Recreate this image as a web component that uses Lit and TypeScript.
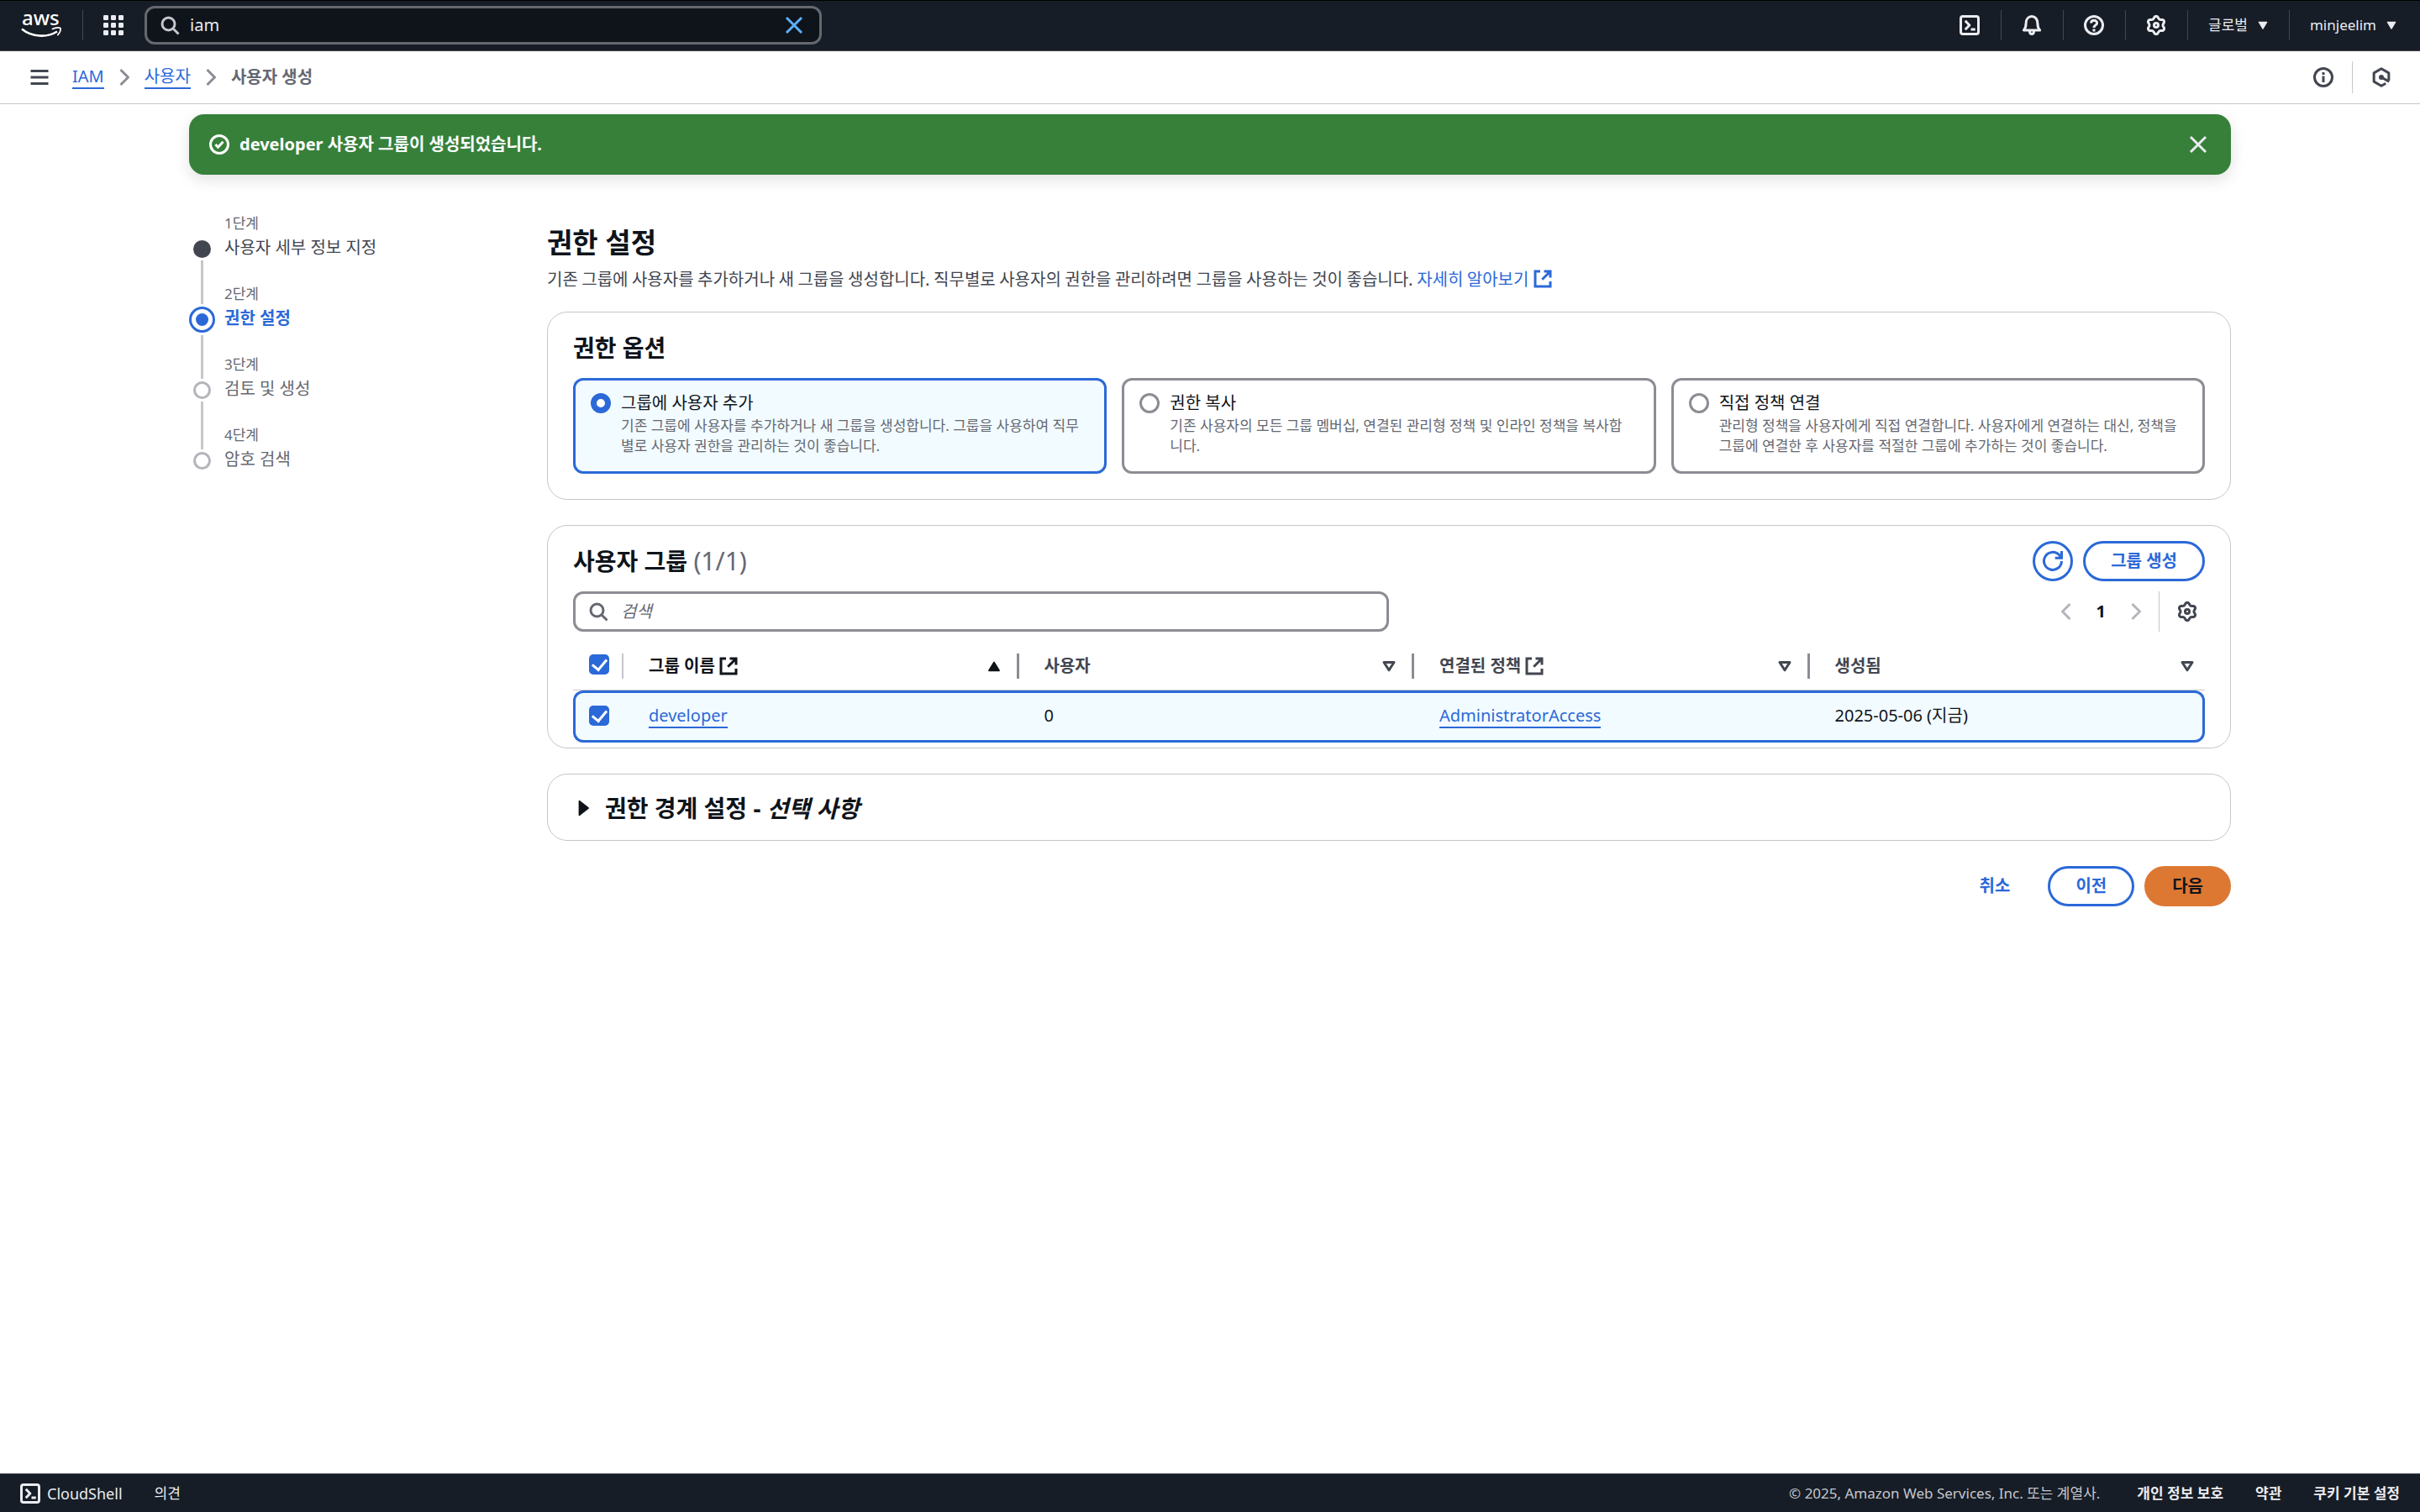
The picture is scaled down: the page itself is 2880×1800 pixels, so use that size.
import { LitElement, html, svg, css, nothing, type TemplateResult, type SVGTemplateResult } from "lit";
import { customElement, property, state } from "lit/decorators.js";
import { classMap } from "lit/directives/class-map.js";

/* Outline of a six-toothed cog on a 16 unit grid. */
const cogPath = (() => {
  const points: string[] = [];
  for (let i = 0; i < 72; i++) {
    const a = (i / 72) * Math.PI * 2;
    const wave = Math.cos(6 * (a + Math.PI / 2));
    const r = 6.2 + 0.9 * wave * (1.15 - 0.15 * wave * wave);
    points.push(`${(8 + r * Math.cos(a)).toFixed(2)} ${(8 + r * Math.sin(a)).toFixed(2)}`);
  }
  return `M${points.join("L")}Z`;
})();

const glyphs: Record<string, SVGTemplateResult> = {
  search: svg`<circle cx="7" cy="7" r="5"></circle><path d="m11 11 4 4"></path>`,
  close: svg`<path d="m2 2 12 12M14 2 2 14"></path>`,
  menu: svg`<path d="M1 3h14M1 8h14M1 13h14"></path>`,
  grid: svg`<g class="solid">${[0, 6, 12].map((y) =>
    [0, 6, 12].map((x) => svg`<rect x=${x} y=${y} width="4" height="4" rx="0.8"></rect>`)
  )}</g>`,
  shell: svg`<rect x="1" y="1" width="14" height="14" rx="1.6"></rect><path d="m4.5 4.5 3.4 3.5-3.4 3.5M9 11.3h3.5"></path>`,
  bell: svg`<path d="M1.6 12h12.8c-1.5-1.6-1.8-2.8-1.8-5.4C12.600 3.200 10.600 1 8 1S3.400 3.200 3.400 6.600C3.400 9.200 3.100 10.400 1.600 12Z"></path><path d="M6.300 12.500c0 3.300 3.400 3.300 3.400 0"></path>`,
  help: svg`<circle cx="8" cy="8" r="7"></circle><path d="M5.700 6.400C5.700 3.500 10.400 3.500 10.400 6.300 10.400 8 8 7.900 8 10"></path><path d="M8 11v2"></path>`,
  gear: svg`<path d=${cogPath}></path><circle cx="8" cy="8" r="1.700"></circle>`,
  info: svg`<circle cx="8" cy="8" r="7"></circle><path d="M8 7v5M8 4v2"></path>`,
  hexagon: svg`<path d="M13.900 10.500V4.600L8 1.200 2.100 4.600v6.800L8 14.800l3.500-2"></path><path d="m8 8 6.200 3.400"></path><circle class="solid" cx="8" cy="8" r="2"></circle>`,
  success: svg`<circle cx="8" cy="8" r="7"></circle><path d="m5 8 2 2.200 4-4.400"></path>`,
  next: svg`<path d="m5 2 6 6-6 6"></path>`,
  previous: svg`<path d="m11 2-6 6 6 6"></path>`,
  external: svg`<path d="M6 2H2v12h12v-4M9 2h5v5M14 2 7.500 8.500"></path>`,
  refresh: svg`<path d="M15 8a7 7 0 1 1-2-5l2 2.200M15 0v5.500H9.800"></path>`,
  caret: svg`<path class="solid" d="M4.200 5h7.600L8 11.300Z" stroke-width="1"></path>`,
  up: svg`<path class="solid" d="M4 11.500h8L8 5Z" stroke-width="1.200"></path>`,
  down: svg`<path d="M4 5h8L8 11.200Z"></path>`,
  expand: svg`<path class="solid" d="M5 2.500v11L12 8Z" stroke-width="1.200"></path>`,
};

@customElement("ui-icon")
class UiIcon extends LitElement {
  static styles = css`
    :host { display: inline-flex; flex: none; width: 24px; height: 24px; }
    .glyph { width: 100%; height: 100%; overflow: visible; fill: none; stroke: currentColor; stroke-width: 2; stroke-linejoin: round; }
    .glyph.miter { stroke-linejoin: miter; }
    .solid { fill: currentColor; }
    .glyph g.solid, .glyph circle.solid { stroke: none; }
  `;
  @property() name = "search";

  render() {
    const miter = ["external", "refresh", "search"].includes(this.name);
    return html`<svg class=${classMap({ glyph: true, miter })} viewBox="0 0 16 16" aria-hidden="true">${glyphs[this.name]}</svg>`;
  }
}

const base = css`
  * { box-sizing: border-box; }
  button, input { font: inherit; color: inherit; margin: 0; }
  button { display: inline-flex; align-items: center; padding: 0; border: 0; background: none; cursor: pointer; }
  a { color: #2b69d8; text-decoration: none; }
  h1, h2, p, ol { margin: 0; padding: 0; }
`;

@customElement("console-header")
class ConsoleHeader extends LitElement {
  static styles = [base, css`
    :host { display: block; }
    .bar { display: flex; align-items: center; height: 61px; padding: 0 28px 1px 25px; border-top: 1px solid #000; border-bottom: 1px solid #424650; background: #161d26; color: #ebebf0; font-size: 17px; }
    .logo { display: flex; width: 49px; height: 30px; }
    .logo svg { overflow: visible; }
    .wordmark { font-family: "Noto Sans", sans-serif; font-size: 24px; font-weight: 500; fill: #fff; }
    .rule { width: 1px; height: 36px; background: #424650; }
    .brand { display: flex; align-items: center; gap: 24px; }
    .search { display: flex; align-items: center; gap: 12px; width: 28vw; height: 46px; margin-left: 25px; padding: 0 18px 0 15px; border: 3px solid #656871; border-radius: 12px; background: #0f141a; font-size: 20px; }
    .search input { flex: 1; min-width: 0; padding: 0; border: 0; outline: 0; background: none; }
    .search ui-icon { color: #c6c6cd; }
    .search button ui-icon { color: #5cb1ff; }
    .tools { display: flex; align-items: center; margin-left: auto; }
    .tool { gap: 8px; padding: 0 25px 0 24px; }
    .tool:last-child { padding-right: 0; }
    .tool .arrow { width: 20px; height: 20px; margin-right: -4px; }
  `];

  render() {
    const rule = html`<span class="rule"></span>`;
    return html`
      <header class="bar">
        <div class="brand">
          <a class="logo" href="#" aria-label="AWS">
            <svg width="49" height="30" viewBox="0 0 49 30">
              <text class="wordmark" x="1" y="15">aws</text>
              <path d="M1 19.500C13 29.500 31 30 43 22.500" fill="none" stroke="#fff" stroke-width="2.600"></path>
              <path d="M37.500 19.500C41.500 17.200 47 17.500 47 19 47.300 21 46 24 43.800 26.500" fill="none" stroke="#fff" stroke-width="1.800" stroke-linecap="round"></path>
            </svg>
          </a>
          ${rule}
          <button aria-label="서비스"><ui-icon name="grid"></ui-icon></button>
        </div>
        <div class="search">
          <ui-icon name="search"></ui-icon>
          <input type="text" aria-label="검색" value="iam" />
          <button aria-label="지우기"><ui-icon name="close"></ui-icon></button>
        </div>
        <div class="tools">
          <button class="tool" aria-label="CloudShell"><ui-icon name="shell"></ui-icon></button>${rule}
          <button class="tool" aria-label="알림"><ui-icon name="bell"></ui-icon></button>${rule}
          <button class="tool" aria-label="도움말"><ui-icon name="help"></ui-icon></button>${rule}
          <button class="tool" aria-label="설정"><ui-icon name="gear"></ui-icon></button>${rule}
          <button class="tool">글로벌<ui-icon class="arrow" name="caret"></ui-icon></button>${rule}
          <button class="tool">minjeelim<ui-icon class="arrow" name="caret"></ui-icon></button>
        </div>
      </header>
    `;
  }
}

@customElement("bread-crumbs")
class BreadCrumbs extends LitElement {
  static styles = [base, css`
    :host { display: flex; align-items: center; height: 63px; padding: 0 34px 0 35px; border-bottom: 1px solid #c6c6cd; color: #424650; }
    .trail { display: flex; align-items: center; gap: 12px; margin-left: 27px; }
    .trail a { border-bottom: 2px solid currentColor; line-height: 26px; }
    .trail ui-icon { color: #8c8c94; }
    .current { color: #656871; font-weight: 700; }
    .side { display: flex; align-items: center; gap: 22px; margin-left: auto; }
    .rule { width: 1px; height: 38px; background: #c6c6cd; }
  `];

  render() {
    return html`
      <button aria-label="메뉴"><ui-icon name="menu"></ui-icon></button>
      <nav class="trail">
        <a href="#">IAM</a><ui-icon name="next"></ui-icon>
        <a href="#">사용자</a><ui-icon name="next"></ui-icon>
        <span class="current">사용자 생성</span>
      </nav>
      <div class="side">
        <button aria-label="정보"><ui-icon name="info"></ui-icon></button>
        <span class="rule"></span>
        <button aria-label="도구"><ui-icon name="hexagon"></ui-icon></button>
      </div>
    `;
  }
}

type StepState = "done" | "active" | "pending";

@customElement("wizard-steps")
class WizardSteps extends LitElement {
  static styles = [base, css`
    :host { display: block; }
    .steps { list-style: none; }
    .step { display: flex; gap: 11px; height: 84px; color: #656871; }
    .rail { display: flex; flex-direction: column; align-items: center; gap: 3px; width: 31px; }
    .line { width: 3px; background: #c6c6cd; }
    .before { height: 29px; }
    .after { flex: 1; }
    .step:first-child .before, .step:last-child .after { background: none; }
    .dot { flex: none; width: 21px; height: 21px; border: 3px solid #b4b4bb; border-radius: 50%; }
    .done .dot { border-color: #424650; background: #424650; }
    .done .name { color: #424650; }
    .active .before { height: 24px; }
    .active .dot { width: 31px; height: 31px; border-color: #2b69d8; padding: 5px; background: #2b69d8 content-box; }
    .active .name { color: #2b69d8; font-weight: 700; }
    .label { font-size: 17px; line-height: 24px; }
    .name { margin-top: 2px; line-height: 30px; }
  `];

  private items: { label: string; name: string; state: StepState }[] = [
    { label: "1단계", name: "사용자 세부 정보 지정", state: "done" },
    { label: "2단계", name: "권한 설정", state: "active" },
    { label: "3단계", name: "검토 및 생성", state: "pending" },
    { label: "4단계", name: "암호 검색", state: "pending" },
  ];

  render() {
    return html`<ol class="steps">
      ${this.items.map((s) => html`
        <li class="step ${s.state}">
          <span class="rail"><span class="line before"></span><span class="dot"></span><span class="line after"></span></span>
          <div>
            <div class="label">${s.label}</div>
            <div class="name">${s.name}</div>
          </div>
        </li>`)}
    </ol>`;
  }
}

const card = css`
  .card { display: block; border: 1px solid #c6c6cd; border-radius: 24px; background: #fff; }
  h2 { font-size: 28px; line-height: 36px; font-weight: 700; }
  .pill { justify-content: center; height: 48px; border: 3px solid #2b69d8; border-radius: 24px; padding: 0 30px; color: #2b69d8; font-weight: 700; }
  .pill.round { width: 48px; padding: 0; }
`;

@customElement("permission-options")
class PermissionOptions extends LitElement {
  static styles = [base, card, css`
    :host { display: block; }
    .card { padding: 24px 30px 30px; }
    .options { display: grid; grid-template-columns: repeat(3, 1fr); gap: 18px; margin-top: 18px; }
    .option { display: flex; gap: 12px; padding: 15px 26px 18px 18px; border: 3px solid #8c8c94; border-radius: 12px; }
    .option.selected { border-color: #2b69d8; background: #f2fbff; }
    .option input { appearance: none; flex: none; width: 24px; height: 24px; border: 3px solid #8c8c94; border-radius: 50%; background: #fff; }
    .option input:checked { border: 7px solid #2b69d8; }
    .title { display: block; margin-bottom: 3px; line-height: 24px; }
    .detail { display: block; font-size: 17px; line-height: 24px; color: #656871; }
  `];

  @state() private selected = 0;

  private options = [
    { title: "그룹에 사용자 추가", detail: "기존 그룹에 사용자를 추가하거나 새 그룹을 생성합니다. 그룹을 사용하여 직무별로 사용자 권한을 관리하는 것이 좋습니다." },
    { title: "권한 복사", detail: "기존 사용자의 모든 그룹 멤버십, 연결된 관리형 정책 및 인라인 정책을 복사합니다." },
    { title: "직접 정책 연결", detail: "관리형 정책을 사용자에게 직접 연결합니다. 사용자에게 연결하는 대신, 정책을 그룹에 연결한 후 사용자를 적절한 그룹에 추가하는 것이 좋습니다." },
  ];

  render() {
    return html`
      <section class="card">
        <h2>권한 옵션</h2>
        <div class="options">
          ${this.options.map((o, i) => html`
            <label class=${classMap({ option: true, selected: i === this.selected })}>
              <input type="radio" name="permission" .checked=${i === this.selected} @change=${() => (this.selected = i)} />
              <span><span class="title">${o.title}</span><span class="detail">${o.detail}</span></span>
            </label>`)}
        </div>
      </section>
    `;
  }
}

@customElement("user-groups")
class UserGroups extends LitElement {
  static styles = [base, card, css`
    :host { display: block; }
    .card { padding: 18px 30px 6px; }
    .head { display: flex; align-items: center; gap: 12px; }
    .head h2 { flex: 1; }
    .count { color: #656871; font-size: 30px; font-weight: 400; }
    .filter { display: flex; align-items: center; justify-content: space-between; margin-top: 12px; }
    .search { display: flex; align-items: center; gap: 15px; width: 50%; height: 48px; padding: 0 15px; border: 3px solid #8c8c94; border-radius: 12px; color: #656871; }
    .search input { flex: 1; min-width: 0; padding: 0; border: 0; outline: 0; background: none; }
    .search input::placeholder { color: #656871; font-style: italic; opacity: 1; }
    .pages { display: flex; align-items: center; gap: 24px; height: 48px; padding-right: 9px; color: #0f141a; font-weight: 700; }
    .pages .page ui-icon { color: #b4b4bb; }
    .prefs { align-self: stretch; padding-left: 21px; border-left: 1px solid #c6c6cd; margin-left: -9px; color: #424650; }
    table { width: 100%; margin-top: 12px; border-spacing: 0; table-layout: fixed; }
    th { height: 58px; padding: 0; border-bottom: 1px solid #c6c6cd; text-align: left; color: #424650; }
    th.pick { width: 60px; }
    td { height: 62px; padding: 0 0 2px 30px; border: 3px solid #2b69d8; border-width: 3px 0; background: #f2fbff; }
    td:first-child { padding: 0 0 0 16px; border-left-width: 3px; border-radius: 12px 0 0 12px; }
    td:last-child { border-right-width: 3px; border-radius: 0 12px 12px 0; }
    td a { border-bottom: 2px solid currentColor; }
    .cell { display: flex; align-items: center; gap: 4px; height: 30px; padding: 0 15px 0 30px; border-right: 3px solid #8c8c94; }
    .pick .cell { padding: 0 0 0 19px; border-right: 2px solid #c6c6cd; }
    th:last-child .cell { padding-right: 9px; border: 0; }
    .cell.sorted { color: #0f141a; }
    .cell button { margin-left: auto; }
    .cell a { display: flex; color: inherit; }
    input[type="checkbox"] { appearance: none; display: grid; place-items: center; width: 24px; height: 24px; margin-bottom: 3px; border: 3px solid #8c8c94; border-radius: 5px; }
    input[type="checkbox"]:checked { border: 0; background: #2b69d8; }
    input[type="checkbox"]:checked::before { content: ""; width: 8px; height: 14px; margin-bottom: 3px; border: solid #fff; border-width: 0 3px 3px 0; transform: rotate(40deg); }
  `];

  private columns = [
    { label: "그룹 이름", link: true, sorted: true },
    { label: "사용자", link: false, sorted: false },
    { label: "연결된 정책", link: true, sorted: false },
    { label: "생성됨", link: false, sorted: false },
  ];

  private groups: { name: string; users: number; policy: string; created: string }[] = [
    { name: "developer", users: 0, policy: "AdministratorAccess", created: "2025-05-06 (지금)" },
  ];

  private header(c: { label: string; link: boolean; sorted: boolean }): TemplateResult {
    return html`<th scope="col">
      <div class=${classMap({ cell: true, sorted: c.sorted })}>
        <span>${c.label}</span>
        ${c.link ? html`<a href="#" aria-label="새 탭에서 열기"><ui-icon name="external"></ui-icon></a>` : nothing}
        <button aria-label="정렬"><ui-icon name=${c.sorted ? "up" : "down"}></ui-icon></button>
      </div>
    </th>`;
  }

  render() {
    return html`
      <section class="card">
        <div class="head">
          <h2>사용자 그룹 <span class="count">(1/1)</span></h2>
          <button class="pill round" aria-label="새로 고침"><ui-icon name="refresh"></ui-icon></button>
          <button class="pill">그룹 생성</button>
        </div>
        <div class="filter">
          <label class="search"><ui-icon name="search"></ui-icon><input type="search" aria-label="검색" placeholder="검색" /></label>
          <div class="pages">
            <button class="page" aria-label="이전 페이지"><ui-icon name="previous"></ui-icon></button>
            <button>1</button>
            <button class="page" aria-label="다음 페이지"><ui-icon name="next"></ui-icon></button>
            <button class="prefs" aria-label="기본 설정"><ui-icon name="gear"></ui-icon></button>
          </div>
        </div>
        <table>
          <thead>
            <tr>
              <th class="pick" scope="col"><div class="cell"><input type="checkbox" aria-label="모두 선택" checked /></div></th>
              ${this.columns.map((c) => this.header(c))}
            </tr>
          </thead>
          <tbody>
            ${this.groups.map((g) => html`
              <tr>
                <td><input type="checkbox" aria-label=${g.name} checked /></td>
                <td><a href="#">${g.name}</a></td>
                <td>${g.users}</td>
                <td><a href="#">${g.policy}</a></td>
                <td>${g.created}</td>
              </tr>`)}
          </tbody>
        </table>
      </section>
    `;
  }
}

@customElement("app-root")
class AppRoot extends LitElement {
  static styles = [base, card, css`
    :host { display: flex; flex-direction: column; min-height: 100vh; background: #fff; color: #0f141a; font: 20px/30px "Noto Sans", "Noto Sans CJK KR", sans-serif; }
    .page { flex: 1; width: 100%; max-width: 2430px; margin: 0 auto; padding-top: 12px; }
    .flash { display: flex; align-items: center; gap: 12px; height: 72px; padding: 0 27px 0 24px; border-radius: 18px; background: #37803a; color: #fff; font-weight: 700; box-shadow: 0 6px 18px rgba(0, 7, 22, 0.12); }
    .flash p { flex: 1; }
    .flash button { color: #ebebf0; }
    .wizard { display: grid; grid-template-columns: 390px minmax(0, 1fr); gap: 36px; padding-top: 46px; }
    .content { display: flex; flex-direction: column; gap: 30px; padding-top: 17px; }
    .intro { margin-bottom: -6px; color: #424650; }
    .intro p { font-family: "Noto Sans CJK KR", sans-serif; }
    h1 { margin-bottom: 10px; font-size: 33px; line-height: 36px; font-weight: 700; color: #0f141a; }
    .intro a { display: inline-flex; align-items: center; gap: 5px; }
    .boundary { padding: 22px 30px 20px; }
    .boundary button { display: flex; gap: 14px; }
    .boundary h2 { text-align: left; }
    .actions { display: flex; justify-content: flex-end; align-items: center; gap: 12px; font-weight: 700; }
    .cancel { padding: 0 33px; color: #2b69d8; font-weight: 700; }
    .primary { border-color: #dd7833; background: #dd7833; color: #0f141a; }
    footer { display: flex; align-items: center; gap: 38px; height: 46px; padding: 0 24px; border-top: 1px solid #424650; background: #161d26; color: #ebebf0; font-size: 17px; }
    footer button { gap: 8px; }
    footer .shell { font-size: 18px; }
    footer a { color: inherit; font-weight: 700; }
    .legal { margin-left: auto; margin-right: 6px; color: #c6c6cd; }
  `];

  @state() private flash = true;

  render() {
    return html`
      <console-header></console-header>
      <bread-crumbs></bread-crumbs>
      <div class="page">
        ${this.flash ? html`<div class="flash" role="status">
          <ui-icon name="success"></ui-icon>
          <p>developer 사용자 그룹이 생성되었습니다.</p>
          <button aria-label="닫기" @click=${() => (this.flash = false)}><ui-icon name="close"></ui-icon></button>
        </div>` : nothing}
        <div class="wizard">
          <wizard-steps></wizard-steps>
          <main class="content">
            <div class="intro">
              <h1>권한 설정</h1>
              <p>기존 그룹에 사용자를 추가하거나 새 그룹을 생성합니다. 직무별로 사용자의 권한을 관리하려면 그룹을 사용하는 것이 좋습니다. <a href="#">자세히 알아보기<ui-icon name="external"></ui-icon></a></p>
            </div>
            <permission-options></permission-options>
            <user-groups></user-groups>
            <section class="card boundary">
              <button aria-expanded="false"><ui-icon name="expand"></ui-icon><h2>권한 경계 설정 - <em>선택 사항</em></h2></button>
            </section>
            <div class="actions">
              <button class="cancel">취소</button>
              <button class="pill">이전</button>
              <button class="pill primary">다음</button>
            </div>
          </main>
        </div>
      </div>
      <footer>
        <button class="shell"><ui-icon name="shell"></ui-icon>CloudShell</button>
        <button>의견</button>
        <span class="legal">© 2025, Amazon Web Services, Inc. 또는 계열사.</span>
        <a href="#">개인 정보 보호</a>
        <a href="#">약관</a>
        <a href="#">쿠키 기본 설정</a>
      </footer>
    `;
  }
}
